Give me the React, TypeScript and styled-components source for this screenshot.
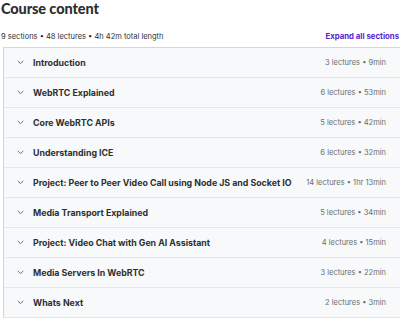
import { createGlobalStyle, styled } from "styled-components";

const GlobalStyle = createGlobalStyle`
  html, body {
    margin: 0;
    padding: 0;
    background: #ffffff;
  }
  body {
    font-family: "Inter", "Noto Sans", sans-serif;
    color: #2d2f31;
  }
`;

const sections = [
  { title: "Introduction", lectures: 3, length: "9min" },
  { title: "WebRTC Explained", lectures: 6, length: "53min" },
  { title: "Core WebRTC APIs", lectures: 5, length: "42min" },
  { title: "Understanding ICE", lectures: 6, length: "32min" },
  {
    title: "Project: Peer to Peer Video Call using Node JS and Socket IO",
    lectures: 14,
    length: "1hr 13min",
  },
  { title: "Media Transport Explained", lectures: 5, length: "34min" },
  { title: "Project: Video Chat with Gen AI Assistant", lectures: 4, length: "15min" },
  { title: "Media Servers In WebRTC", lectures: 3, length: "22min" },
  { title: "Whats Next", lectures: 2, length: "3min" },
];

const Chevron = () => (
  <svg width="7" height="5" viewBox="0 0 7 5" fill="none">
    <path d="M1 1.2 L3.5 3.6 L6 1.2" stroke="#6a6f73" strokeWidth="1" strokeLinecap="round" />
  </svg>
);

const App = () => {
  return (
    <Page>
      <GlobalStyle />
      <Title>Course content</Title>
      <Summary>
        <span>9 sections • 48 lectures • 4h 42m total length</span>
        <ExpandLink>Expand all sections</ExpandLink>
      </Summary>
      <List>
        {sections.map((s) => (
          <Row key={s.title}>
            <Left>
              <ChevronWrap>
                <Chevron />
              </ChevronWrap>
              <SectionTitle>{s.title}</SectionTitle>
            </Left>
            <Meta>
              {s.lectures} lectures • {s.length}
            </Meta>
          </Row>
        ))}
      </List>
    </Page>
  );
};
export default App;

const Page = styled.main`
  width: 400px;
  padding: 0 0 0 1px;
  box-sizing: border-box;
`;

const Title = styled.h2`
  margin: 0;
  font-family: "Lato", "Inter", sans-serif;
  font-size: 14.5px;
  font-weight: 900;
  line-height: 17px;
  letter-spacing: -0.1px;
  color: #2d2f31;
`;

const Summary = styled.div`
  display: flex;
  justify-content: space-between;
  align-items: center;
  margin-top: 12px;
  height: 14px;
  font-size: 7.5px;
  color: #2d2f31;
`;

const ExpandLink = styled.span`
  color: #5624d0;
  font-weight: 700;
  font-size: 7.8px;
  padding-right: 1px;
`;

const List = styled.div`
  margin-top: 4px;
  margin-left: 2px;
  border-top: 1px solid #d1d7dc;
  border-left: 1px solid #d1d7dc;
`;

const Row = styled.div`
  display: flex;
  align-items: center;
  justify-content: space-between;
  height: 29px;
  background: #f7f9fa;
  border-bottom: 1px solid #e4e8eb;
  padding: 0 14px 0 13px;
`;

const Left = styled.div`
  display: flex;
  align-items: center;
  gap: 9px;
`;

const ChevronWrap = styled.span`
  display: flex;
  width: 7px;
  justify-content: center;
`;

const SectionTitle = styled.span`
  font-size: 8.8px;
  font-weight: 700;
  color: #2d2f31;
`;

const Meta = styled.span`
  font-size: 7.5px;
  color: #6a6f73;
`;
